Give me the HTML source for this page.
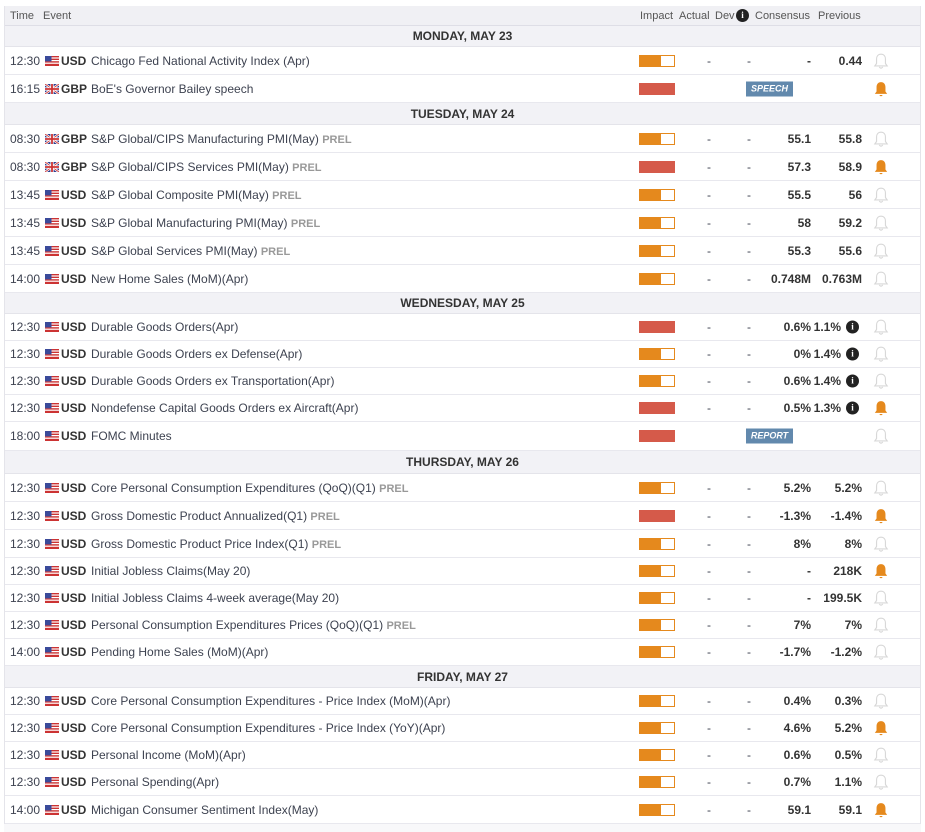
<!DOCTYPE html>
<html><head><meta charset="utf-8"><style>
*{margin:0;padding:0;box-sizing:border-box}
body{width:925px;height:832px;background:#fff;font-family:"Liberation Sans",Arial,sans-serif;font-size:12px;color:#3d4250;position:relative;overflow:hidden}
.tb{position:absolute;left:4px;top:6px;width:917px;height:818px;border:1px solid #e4e4ea;border-top:none}
.r{position:absolute;left:5px;width:915px;border-bottom:1px solid #e8e8ee;background:#fff}
.r>*{position:absolute;top:50%;transform:translateY(-50%);white-space:nowrap}
.day{position:absolute;left:5px;width:915px;background:#f2f2f6;text-align:center;font-weight:bold;color:#333;border-bottom:1px solid #e4e4ea}
.hd{position:absolute;left:5px;top:6px;width:915px;height:20px;background:#f0f0f4;border-bottom:1px solid #dedee6;font-size:11px;color:#555}
.hd span{position:absolute;top:4px}
.t{left:5px}.f{left:40px;width:14px;height:10px}.c{left:56px;font-weight:bold;color:#333}.e{left:86px}
.p{color:#999;font-weight:bold;font-size:11px}
.im{left:634px;width:36px;height:12px;border:1px solid #e5891d;background:linear-gradient(90deg,#e5891d 62%,#fff 62%)}
.hi{border-color:#d55a4a;background:#d55a4a}
.a{left:702px}.d{left:742px}
.cs{right:109px;font-weight:bold;color:#333}.pv{right:58px;font-weight:bold;color:#333}.pi{right:79px;font-weight:bold;color:#333}
.i{left:841px;width:13px;height:13px;border-radius:50%;background:#222;color:#fff;font-size:9px;font-weight:bold;text-align:center;line-height:13px;font-family:"Liberation Serif",serif}
.b{left:868px;width:16px;height:16px}
.tag{left:741px;width:47px;height:15px;background:#6289ad;color:#fff;font-size:9px;font-weight:bold;font-style:italic;text-align:center;line-height:15px}
</style></head><body>
<svg width="0" height="0" style="position:absolute"><defs>
<symbol id="us" viewBox="0 0 14 10"><rect width="14" height="10" fill="#c33"/><g fill="#fff"><rect y="1.4" width="14" height="1.2"/><rect y="4" width="14" height="1.2"/><rect y="6.6" width="14" height="1.2"/></g><rect width="6.5" height="5.4" fill="#3a4a9a"/></symbol>
<symbol id="gb" viewBox="0 0 14 10"><rect width="14" height="10" fill="#2a3b8f"/><path d="M0 0L14 10M14 0L0 10" stroke="#fff" stroke-width="2.4"/><path d="M0 0L14 10M14 0L0 10" stroke="#c33" stroke-width="0.9"/><path d="M7 0V10M0 5H14" stroke="#fff" stroke-width="3.2"/><path d="M7 0V10M0 5H14" stroke="#c33" stroke-width="1.8"/></symbol>
<symbol id="bo" viewBox="0 0 14 14"><path d="M7 1C4.4 1 3.1 3 3.1 5.4V9.2L1.6 11.3H12.4L10.9 9.2V5.4C10.9 3 9.6 1 7 1ZM5.5 12.2Q7 14.3 8.5 12.2" fill="none" stroke="#d8d8d8" stroke-width="1"/></symbol>
<symbol id="bf" viewBox="0 0 14 14"><path d="M7 1C4.4 1 3.1 3 3.1 5.4V9.2L1.6 11.3H12.4L10.9 9.2V5.4C10.9 3 9.6 1 7 1ZM5.5 12.2Q7 14.5 8.5 12.2Z" fill="#e5891d"/></symbol>
</defs></svg>
<div class="tb"></div>
<div class="hd"><span style="left:5px">Time</span><span style="left:38px">Event</span><span style="left:635px">Impact</span><span style="left:674px">Actual</span><span style="left:710px">Dev</span><span style="left:731px;width:13px;height:13px;top:3px;border-radius:50%;background:#222;color:#fff;font-size:9px;text-align:center;line-height:13px;font-weight:bold;font-family:'Liberation Serif',serif">i</span><span style="left:750px">Consensus</span><span style="left:813px">Previous</span></div>

<div class="day" style="top:26px;height:21px;line-height:21px">MONDAY, MAY 23</div>
<div class="r" style="top:47px;height:28px"><span class="t">12:30</span><svg class="f"><use href="#us"/></svg><span class="c">USD</span><span class="e">Chicago Fed National Activity Index (Apr)</span><span class="im"></span><span class="a">-</span><span class="d">-</span><span class="cs">-</span><span class="pv">0.44</span><svg class="b"><use href="#bo"/></svg></div>
<div class="r" style="top:75px;height:28px"><span class="t">16:15</span><svg class="f"><use href="#gb"/></svg><span class="c">GBP</span><span class="e">BoE's Governor Bailey speech</span><span class="im hi"></span><span class="tag">SPEECH</span><svg class="b"><use href="#bf"/></svg></div>

<div class="day" style="top:103px;height:22px;line-height:22px">TUESDAY, MAY 24</div>
<div class="r" style="top:125px;height:28px"><span class="t">08:30</span><svg class="f"><use href="#gb"/></svg><span class="c">GBP</span><span class="e">S&amp;P Global/CIPS Manufacturing PMI(May) <span class="p">PREL</span></span><span class="im"></span><span class="a">-</span><span class="d">-</span><span class="cs">55.1</span><span class="pv">55.8</span><svg class="b"><use href="#bo"/></svg></div>
<div class="r" style="top:153px;height:28px"><span class="t">08:30</span><svg class="f"><use href="#gb"/></svg><span class="c">GBP</span><span class="e">S&amp;P Global/CIPS Services PMI(May) <span class="p">PREL</span></span><span class="im hi"></span><span class="a">-</span><span class="d">-</span><span class="cs">57.3</span><span class="pv">58.9</span><svg class="b"><use href="#bf"/></svg></div>
<div class="r" style="top:181px;height:28px"><span class="t">13:45</span><svg class="f"><use href="#us"/></svg><span class="c">USD</span><span class="e">S&amp;P Global Composite PMI(May) <span class="p">PREL</span></span><span class="im"></span><span class="a">-</span><span class="d">-</span><span class="cs">55.5</span><span class="pv">56</span><svg class="b"><use href="#bo"/></svg></div>
<div class="r" style="top:209px;height:28px"><span class="t">13:45</span><svg class="f"><use href="#us"/></svg><span class="c">USD</span><span class="e">S&amp;P Global Manufacturing PMI(May) <span class="p">PREL</span></span><span class="im"></span><span class="a">-</span><span class="d">-</span><span class="cs">58</span><span class="pv">59.2</span><svg class="b"><use href="#bo"/></svg></div>
<div class="r" style="top:237px;height:28px"><span class="t">13:45</span><svg class="f"><use href="#us"/></svg><span class="c">USD</span><span class="e">S&amp;P Global Services PMI(May) <span class="p">PREL</span></span><span class="im"></span><span class="a">-</span><span class="d">-</span><span class="cs">55.3</span><span class="pv">55.6</span><svg class="b"><use href="#bo"/></svg></div>
<div class="r" style="top:265px;height:28px"><span class="t">14:00</span><svg class="f"><use href="#us"/></svg><span class="c">USD</span><span class="e">New Home Sales (MoM)(Apr)</span><span class="im"></span><span class="a">-</span><span class="d">-</span><span class="cs">0.748M</span><span class="pv">0.763M</span><svg class="b"><use href="#bo"/></svg></div>

<div class="day" style="top:293px;height:21px;line-height:21px">WEDNESDAY, MAY 25</div>
<div class="r" style="top:314px;height:27px"><span class="t">12:30</span><svg class="f"><use href="#us"/></svg><span class="c">USD</span><span class="e">Durable Goods Orders(Apr)</span><span class="im hi"></span><span class="a">-</span><span class="d">-</span><span class="cs">0.6%</span><span class="pi">1.1%</span><span class="i">i</span><svg class="b"><use href="#bo"/></svg></div>
<div class="r" style="top:341px;height:27px"><span class="t">12:30</span><svg class="f"><use href="#us"/></svg><span class="c">USD</span><span class="e">Durable Goods Orders ex Defense(Apr)</span><span class="im"></span><span class="a">-</span><span class="d">-</span><span class="cs">0%</span><span class="pi">1.4%</span><span class="i">i</span><svg class="b"><use href="#bo"/></svg></div>
<div class="r" style="top:368px;height:27px"><span class="t">12:30</span><svg class="f"><use href="#us"/></svg><span class="c">USD</span><span class="e">Durable Goods Orders ex Transportation(Apr)</span><span class="im"></span><span class="a">-</span><span class="d">-</span><span class="cs">0.6%</span><span class="pi">1.4%</span><span class="i">i</span><svg class="b"><use href="#bo"/></svg></div>
<div class="r" style="top:395px;height:27px"><span class="t">12:30</span><svg class="f"><use href="#us"/></svg><span class="c">USD</span><span class="e">Nondefense Capital Goods Orders ex Aircraft(Apr)</span><span class="im hi"></span><span class="a">-</span><span class="d">-</span><span class="cs">0.5%</span><span class="pi">1.3%</span><span class="i">i</span><svg class="b"><use href="#bf"/></svg></div>
<div class="r" style="top:422px;height:29px"><span class="t">18:00</span><svg class="f"><use href="#us"/></svg><span class="c">USD</span><span class="e">FOMC Minutes</span><span class="im hi"></span><span class="tag">REPORT</span><svg class="b"><use href="#bo"/></svg></div>

<div class="day" style="top:451px;height:23px;line-height:23px">THURSDAY, MAY 26</div>
<div class="r" style="top:474px;height:28px"><span class="t">12:30</span><svg class="f"><use href="#us"/></svg><span class="c">USD</span><span class="e">Core Personal Consumption Expenditures (QoQ)(Q1) <span class="p">PREL</span></span><span class="im"></span><span class="a">-</span><span class="d">-</span><span class="cs">5.2%</span><span class="pv">5.2%</span><svg class="b"><use href="#bo"/></svg></div>
<div class="r" style="top:502px;height:28px"><span class="t">12:30</span><svg class="f"><use href="#us"/></svg><span class="c">USD</span><span class="e">Gross Domestic Product Annualized(Q1) <span class="p">PREL</span></span><span class="im hi"></span><span class="a">-</span><span class="d">-</span><span class="cs">-1.3%</span><span class="pv">-1.4%</span><svg class="b"><use href="#bf"/></svg></div>
<div class="r" style="top:530px;height:28px"><span class="t">12:30</span><svg class="f"><use href="#us"/></svg><span class="c">USD</span><span class="e">Gross Domestic Product Price Index(Q1) <span class="p">PREL</span></span><span class="im"></span><span class="a">-</span><span class="d">-</span><span class="cs">8%</span><span class="pv">8%</span><svg class="b"><use href="#bo"/></svg></div>
<div class="r" style="top:558px;height:27px"><span class="t">12:30</span><svg class="f"><use href="#us"/></svg><span class="c">USD</span><span class="e">Initial Jobless Claims(May 20)</span><span class="im"></span><span class="a">-</span><span class="d">-</span><span class="cs">-</span><span class="pv">218K</span><svg class="b"><use href="#bf"/></svg></div>
<div class="r" style="top:585px;height:27px"><span class="t">12:30</span><svg class="f"><use href="#us"/></svg><span class="c">USD</span><span class="e">Initial Jobless Claims 4-week average(May 20)</span><span class="im"></span><span class="a">-</span><span class="d">-</span><span class="cs">-</span><span class="pv">199.5K</span><svg class="b"><use href="#bo"/></svg></div>
<div class="r" style="top:612px;height:27px"><span class="t">12:30</span><svg class="f"><use href="#us"/></svg><span class="c">USD</span><span class="e">Personal Consumption Expenditures Prices (QoQ)(Q1) <span class="p">PREL</span></span><span class="im"></span><span class="a">-</span><span class="d">-</span><span class="cs">7%</span><span class="pv">7%</span><svg class="b"><use href="#bo"/></svg></div>
<div class="r" style="top:639px;height:27px"><span class="t">14:00</span><svg class="f"><use href="#us"/></svg><span class="c">USD</span><span class="e">Pending Home Sales (MoM)(Apr)</span><span class="im"></span><span class="a">-</span><span class="d">-</span><span class="cs">-1.7%</span><span class="pv">-1.2%</span><svg class="b"><use href="#bo"/></svg></div>

<div class="day" style="top:666px;height:22px;line-height:22px">FRIDAY, MAY 27</div>
<div class="r" style="top:688px;height:27px"><span class="t">12:30</span><svg class="f"><use href="#us"/></svg><span class="c">USD</span><span class="e">Core Personal Consumption Expenditures - Price Index (MoM)(Apr)</span><span class="im"></span><span class="a">-</span><span class="d">-</span><span class="cs">0.4%</span><span class="pv">0.3%</span><svg class="b"><use href="#bo"/></svg></div>
<div class="r" style="top:715px;height:27px"><span class="t">12:30</span><svg class="f"><use href="#us"/></svg><span class="c">USD</span><span class="e">Core Personal Consumption Expenditures - Price Index (YoY)(Apr)</span><span class="im"></span><span class="a">-</span><span class="d">-</span><span class="cs">4.6%</span><span class="pv">5.2%</span><svg class="b"><use href="#bf"/></svg></div>
<div class="r" style="top:742px;height:27px"><span class="t">12:30</span><svg class="f"><use href="#us"/></svg><span class="c">USD</span><span class="e">Personal Income (MoM)(Apr)</span><span class="im"></span><span class="a">-</span><span class="d">-</span><span class="cs">0.6%</span><span class="pv">0.5%</span><svg class="b"><use href="#bo"/></svg></div>
<div class="r" style="top:769px;height:27px"><span class="t">12:30</span><svg class="f"><use href="#us"/></svg><span class="c">USD</span><span class="e">Personal Spending(Apr)</span><span class="im"></span><span class="a">-</span><span class="d">-</span><span class="cs">0.7%</span><span class="pv">1.1%</span><svg class="b"><use href="#bo"/></svg></div>
<div class="r" style="top:796px;height:28px"><span class="t">14:00</span><svg class="f"><use href="#us"/></svg><span class="c">USD</span><span class="e">Michigan Consumer Sentiment Index(May)</span><span class="im"></span><span class="a">-</span><span class="d">-</span><span class="cs">59.1</span><span class="pv">59.1</span><svg class="b"><use href="#bf"/></svg></div>
<div style="position:absolute;left:4px;top:824px;width:917px;height:8px;background:#f8f8fa"></div>
</body></html>
